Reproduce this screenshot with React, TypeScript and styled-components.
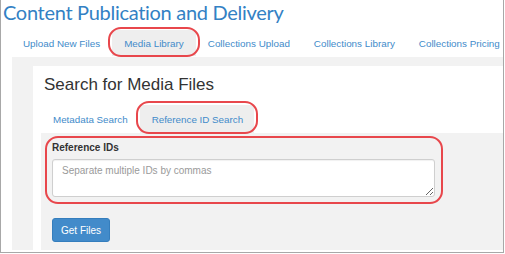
import styled, { createGlobalStyle } from 'styled-components';

const GlobalStyle = createGlobalStyle`
  html, body {
    margin: 0;
    padding: 0;
    background: #ffffff;
  }

  body {
    font-family: 'Liberation Sans', Arial, sans-serif;
  }
`;

const Frame = styled.div`
  width: 504px;
  height: 253px;
  box-sizing: border-box;
  border: 1px solid #a8a8a8;
  border-top: none;
  display: flex;
  flex-direction: column;
  overflow: hidden;
  background: #fff;
`;

const Title = styled.h1`
  margin: 0;
  padding-left: 2px;
  font-family: Lato, 'Open Sans', sans-serif;
  font-weight: 400;
  font-size: 20px;
  letter-spacing: -0.3px;
  line-height: 25px;
  color: #3381c4;
  white-space: nowrap;
`;

const Nav = styled.nav`
  display: flex;
  margin: 5px 0 0 10px;
`;

// red rounded annotation ring drawn over the highlighted items
const Ring = styled.span<{ $inset: string }>`
  position: absolute;
  inset: ${(p) => p.$inset};
  border: 2px solid #e8474c;
  border-radius: 13px;
  pointer-events: none;
`;

const NavLink = styled.a<{ $active?: boolean }>`
  position: relative;
  display: flex;
  align-items: center;
  height: 26px;
  padding: 0 12px;
  font-size: 9.85px;
  color: #428bca;
  text-decoration: none;
  white-space: nowrap;
  background: ${(p) => (p.$active ? '#eeeeee' : 'transparent')};
  border-radius: 3px 3px 0 0;
`;

const Panel = styled.main`
  flex: 1;
  display: flex;
  margin: 1px 0 2px 11px;
  padding: 9px 0 0 21px;
  background: #f2f2f2;
`;

const Card = styled.section`
  flex: 1;
  display: flex;
  flex-direction: column;
  padding-left: 8px;
  background: #fff;
`;

const Heading = styled.h3`
  margin: 9px 0 0 3px;
  font-size: 17px;
  line-height: 20px;
  font-weight: 400;
  color: #333;
`;

const Tabs = styled.div`
  display: flex;
  margin-top: 10px;
`;

const Tab = styled.a<{ $active?: boolean }>`
  position: relative;
  display: flex;
  align-items: center;
  height: 28px;
  padding: 0 11px 0 12px;
  margin-left: ${(p) => (p.$active ? '1px' : '0')};
  font-size: 9.8px;
  color: #428bca;
  text-decoration: none;
  white-space: nowrap;
  background: ${(p) => (p.$active ? '#eeeeee' : 'transparent')};
  border-radius: 3px 3px 0 0;
`;

const Section = styled.div`
  flex: 1;
  display: flex;
  flex-direction: column;
  align-items: flex-start;
  padding: 8px 0 0 11px;
  background: #f2f2f2;
`;

const FormGroup = styled.div`
  position: relative;
  display: flex;
  flex-direction: column;
  width: 383px;
`;

const Label = styled.label`
  font-size: 10px;
  line-height: 14px;
  font-weight: 700;
  color: #333;
  margin-bottom: 4px;
`;

const TextArea = styled.textarea`
  box-sizing: border-box;
  width: 383px;
  height: 38px;
  margin: 0;
  padding: 4px 9px;
  border: 1px solid #cfcfcf;
  border-radius: 3px;
  box-shadow: inset 0 1px 1px rgba(0, 0, 0, 0.06);
  font-family: 'Liberation Sans', Arial, sans-serif;
  font-size: 10px;
  line-height: 14px;
  color: #555;
  background: #fff;
  resize: vertical;

  &::placeholder {
    color: #9a9a9a;
  }
`;

const Button = styled.button`
  margin-top: 21px;
  height: 24px;
  padding: 0 8px;
  border: 1px solid #357ebd;
  border-radius: 3px;
  background: #428bca;
  color: #fff;
  font-family: 'Liberation Sans', Arial, sans-serif;
  font-size: 10px;
`;

const navItems = [
  'Upload New Files',
  'Media Library',
  'Collections Upload',
  'Collections Library',
  'Collections Pricing',
];

export default function App() {
  return (
    <>
      <GlobalStyle />
      <Frame>
        <Title>Content Publication and Delivery</Title>
        <Nav>
          {navItems.map((item) => (
            <NavLink key={item} $active={item === 'Media Library'}>
              {item}
              {item === 'Media Library' && <Ring $inset="-3px -4px -1px -4px" />}
            </NavLink>
          ))}
        </Nav>
        <Panel>
          <Card>
            <Heading>Search for Media Files</Heading>
            <Tabs>
              <Tab>Metadata Search</Tab>
              <Tab $active>
                Reference ID Search
                <Ring $inset="-4px -4px -1px -4px" />
              </Tab>
            </Tabs>
            <Section>
              <FormGroup>
                <Label>Reference IDs</Label>
                <TextArea placeholder="Separate multiple IDs by commas" />
                <Ring $inset="-5px -8px -7px -7px" />
              </FormGroup>
              <Button>Get Files</Button>
            </Section>
          </Card>
        </Panel>
      </Frame>
    </>
  );
}
